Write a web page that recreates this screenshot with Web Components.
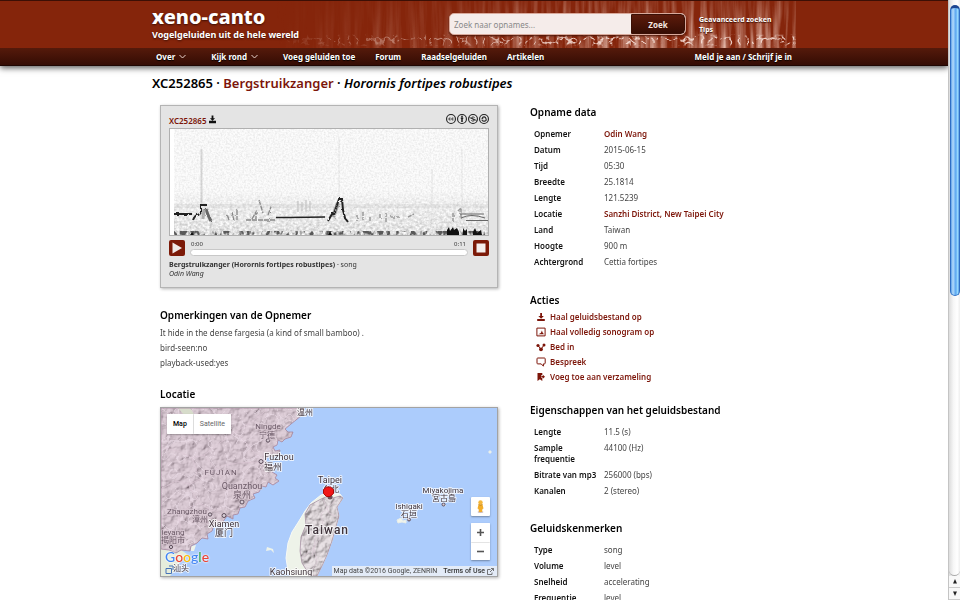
<!doctype html>
<html lang="nl">
<head>
<meta charset="utf-8">
<title>XC252865 Bergstruikzanger (Horornis fortipes robustipes) :: xeno-canto</title>
<style>
  html, body { margin: 0; height: 100%; }
  body {
    --brand: #85250b;
    --link: #7c1509;
    --ink: #111;
    --text: #444;
    font: 400 8px/15px "Noto Sans", "Open Sans", "Noto Sans CJK SC", sans-serif;
    color: var(--text);
    background: #fff;
  }
</style>
</head>
<body>
<xc-window>
  <xc-header slot="header"></xc-header>
  <xc-page>
    <xc-title slot="title" code="XC252865" name="Bergstruikzanger" species="Horornis fortipes robustipes"></xc-title>
    <xc-player slot="left" code="XC252865" start="0:00" end="0:11">
      <span slot="what"><b>Bergstruikzanger (Horornis fortipes robustipes)</b> · song</span>
      <span slot="who">Odin Wang</span>
    </xc-player>
    <xc-section slot="left" class="remarks" heading="Opmerkingen van de Opnemer">
      <div>It hide in the dense fargesia (a kind of small bamboo) .</div>
      <div>bird-seen:no</div>
      <div>playback-used:yes</div>
    </xc-section>
    <xc-section slot="left" class="place" heading="Locatie"><xc-map></xc-map></xc-section>

    <xc-section slot="right" class="facts first" heading="Opname data">
      <xc-facts rows='[["Opnemer","Odin Wang",1],["Datum","2015-06-15"],["Tijd","05:30"],["Breedte","25.1814"],["Lengte","121.5239"],["Locatie","Sanzhi District, New Taipei City",1],["Land","Taiwan"],["Hoogte","900 m"],["Achtergrond","Cettia fortipes"]]'></xc-facts>
    </xc-section>
    <xc-section slot="right" class="actions" heading="Acties">
      <xc-action icon="download">Haal geluidsbestand op</xc-action>
      <xc-action icon="sonogram">Haal volledig sonogram op</xc-action>
      <xc-action icon="share">Bed in</xc-action>
      <xc-action icon="discuss">Bespreek</xc-action>
      <xc-action icon="collect">Voeg toe aan verzameling</xc-action>
    </xc-section>
    <xc-section slot="right" class="facts file" heading="Eigenschappen van het geluidsbestand">
      <xc-facts rows='[["Lengte","11.5 (s)"],["Sample frequentie","44100 (Hz)"],["Bitrate van mp3","256000 (bps)"],["Kanalen","2 (stereo)"]]'></xc-facts>
    </xc-section>
    <xc-section slot="right" class="facts" heading="Geluidskenmerken">
      <xc-facts rows='[["Type","song"],["Volume","level"],["Snelheid","accelerating"],["Frequentie","level"]]'></xc-facts>
    </xc-section>
  </xc-page>
  <xc-scrollbar slot="bar"></xc-scrollbar>
</xc-window>

<script>
const define = (name, render) => customElements.define(name, class extends HTMLElement {
  constructor() {
    super();
    this.attachShadow({ mode: 'open' });
  }
  connectedCallback() {
    const t = document.createElement('template');
    t.innerHTML = render(this);
    this.shadowRoot.replaceChildren(t.content.cloneNode(true));
  }
});

define('xc-window', () => `
<style>
  :host { display: flex; height: 100vh; overflow: hidden; }
  .view { flex: 1; min-width: 0; overflow: hidden; }
</style>
<div class="view"><slot name="header"></slot><slot></slot></div>
<slot name="bar"></slot>`);

define('xc-scrollbar', () => `
<style>
  :host { display: flex; flex-direction: column; flex: none; width: 12px; box-sizing: border-box;
    border-left: 1px solid #c4c4c4; background: linear-gradient(90deg, #dcdcdc, #f6f6f6 40%, #fff 75%, #eee); }
  .track { flex: 1; padding: 5px 0 0 1px; border-bottom: 1px solid #aaa; border-radius: 0 0 6px 6px; }
  .thumb { height: 51%; border-radius: 5px; border: 1px solid #2e6fc4; border-top: 3px solid #1b4591; box-sizing: border-box;
    background: linear-gradient(90deg, #5c9fe6, #b5dcfb 25%, #7dbcf5 45%, #5aa6f0 60%, #9fe0ff 85%, #4c93df); }
  .arrow { height: 12px; display: grid; place-items: center; background: #f8f8f8; border-bottom: 1px solid #ccc; box-sizing: border-box; }
  svg { width: 6px; height: 5px; display: block; fill: #222; }
</style>
<div class="track"><div class="thumb"></div></div>
<div class="arrow"><svg viewBox="0 0 6 5"><path d="M3 0 5 4.500H1Z"/></svg></div>
<div class="arrow"><svg viewBox="0 0 6 5"><path d="M3 5 1 .5h4Z"/></svg></div>`);

define('xc-header', () => `
<style>
  :host { display: block; position: relative; color: #fff; font-weight: 700; box-shadow: 0 2px 6px rgba(0,0,0,.65); }
  .top { border-top: 1px solid #3c0f05; background: #85250b; }
  .wrap { max-width: 644px; margin: 0 auto; box-sizing: border-box; }
  .row { position: relative; display: flex; height: 47px; }
  .voice { position: absolute; right: 0; top: 0; width: 520px; height: 47px; }
  .brand { position: relative; text-shadow: 0 1px 2px #3c0f05; }
  .logo { display: block; font-size: 20px; font-weight: 800; line-height: 24px; padding-top: 4px; }
  .tag { font-size: 9px; line-height: 12px; }
  a { color: inherit; text-decoration: none; }
  form { position: relative; display: flex; box-sizing: border-box; margin: 12px 0 0 auto; width: 237px; height: 22px;
    border-radius: 5px; border: 1px solid #d9a99b; background: #f5ecea; box-shadow: 0 1px 2px #4a1508; overflow: hidden; }
  input { flex: 1; min-width: 0; border: 0; padding: 0 4px; background: none; font: 400 8px "Noto Sans", sans-serif; color: #444; outline: 0; }
  input::placeholder { color: #888; opacity: 1; }
  form button { width: 54px; border: 1px solid #3a0f05; border-radius: 0 4px 4px 0; padding: 0; color: #f5e6e0;
    background: linear-gradient(#5c1b0b, #360d04); font: 700 8px "Noto Sans", sans-serif; }
  .help { position: relative; width: 110px; box-sizing: border-box; padding: 14px 0 0 13px; font-size: 7px; line-height: 10px; text-shadow: 0 1px 1px #3c0f05; }
  .help a { display: block; white-space: nowrap; }
  .bar { background: linear-gradient(#551a0b, #340c04); border-bottom: 1px solid #1f0602; }
  nav { display: flex; align-items: center; gap: 20px; padding: 0 4px; height: 17px; line-height: 17px; text-shadow: 0 1px 1px #000; white-space: nowrap; }
  nav button { font: inherit; color: inherit; background: none; border: 0; padding: 0 5px 0 0; display: flex; align-items: center; gap: 4px; text-shadow: inherit; }
  nav svg { width: 7px; height: 5px; fill: none; stroke: #e9d3cc; stroke-width: 1; }
  .login { margin-left: auto; }
</style>
<header>
<div class="top"><div class="wrap row">
  <svg class="voice" viewBox="0 0 520 47" preserveAspectRatio="none" aria-hidden="true">
    <defs>
      <linearGradient id="fade"><stop offset="0" stop-color="#000"/><stop offset=".35" stop-color="#555"/><stop offset=".6" stop-color="#ddd"/></linearGradient>
      <linearGradient id="fall" x2="0" y2="1"><stop offset="0" stop-color="#000" stop-opacity=".6"/><stop offset=".8" stop-color="#000" stop-opacity="0"/></linearGradient>
      <linearGradient id="band" x2="0" y2="1"><stop offset=".7" stop-color="#000"/><stop offset=".78" stop-color="#fff"/><stop offset=".9" stop-color="#fff"/><stop offset=".97" stop-color="#000"/></linearGradient>
      <linearGradient id="left"><stop offset="0" stop-color="#000"/><stop offset=".12" stop-color="#000" stop-opacity=".75"/><stop offset=".6" stop-color="#000" stop-opacity=".1"/></linearGradient>
      <mask id="m1"><rect width="520" height="47" fill="url(#fade)"/><rect width="520" height="47" fill="url(#fall)"/></mask>
      <mask id="m2"><rect width="520" height="47" fill="url(#band)"/><rect width="520" height="47" fill="url(#left)"/></mask>
      <filter id="streak" x="0" y="0" width="1" height="1"><feTurbulence type="fractalNoise" baseFrequency=".16 .012" numOctaves="3" seed="7"/><feColorMatrix values="0 0 0 0 .92  0 0 0 0 .68  0 0 0 0 .6  2 0 0 0 -.780"/></filter>
      <filter id="calls" x="0" y="0" width="1" height="1"><feTurbulence type="turbulence" baseFrequency=".11 .13" numOctaves="2" seed="4"/><feColorMatrix values="0 0 0 0 .93  0 0 0 0 .74  0 0 0 0 .68  -8 0 0 0 1.400"/></filter>
    </defs>
    <g mask="url(#m1)"><rect width="520" height="47" filter="url(#streak)"/></g>
    <g mask="url(#m2)"><rect width="520" height="47" filter="url(#calls)"/></g>
  </svg>
  <div class="brand"><a class="logo" href="#">xeno-canto</a><div class="tag">Vogelgeluiden uit de hele wereld</div></div>
  <form><input type="text" aria-label="Zoek naar opnames" placeholder="Zoek naar opnames..."><button type="button">Zoek</button></form>
  <div class="help"><a href="#">Geavanceerd zoeken</a><a href="#">Tips</a></div>
</div></div>
<div class="bar"><nav class="wrap">
  <button type="button" aria-haspopup="true">Over <svg viewBox="0 0 7 5"><path d="M.5 1 3.500 4l3-3"/></svg></button>
  <button type="button" aria-haspopup="true">Kijk rond <svg viewBox="0 0 7 5"><path d="M.5 1 3.500 4l3-3"/></svg></button>
  <a href="#">Voeg geluiden toe</a><a href="#">Forum</a><a href="#">Raadselgeluiden</a><a href="#">Artikelen</a>
  <a class="login" href="#">Meld je aan / Schrijf je in</a>
</nav></div>
</header>`);

define('xc-page', () => `
<style>
  :host { display: block; max-width: 644px; margin: 0 auto; padding-top: 8px; }
  .cols { display: grid; grid-template-columns: 338fr 266fr; column-gap: 32px; padding: 13px 0 0 8px; }
  ::slotted(.remarks) { --pad: 3px; margin-top: 20px; }
  ::slotted(.place) { --pad: 6px; margin-top: 17px; }
  ::slotted(.facts) { --pad: 7px; margin-top: 22px; }
  ::slotted(.facts.first) { margin-top: 0; }
  ::slotted(.actions) { --pad: 2px; margin-top: 23px; }
  ::slotted(.facts.file) { margin-top: 19px; }
</style>
<main><slot name="title"></slot>
<div class="cols"><div><slot name="left"></slot></div><div><slot name="right"></slot></div></div></main>`);

define('xc-title', el => `
<style>
  :host { display: block; }
  h1 { margin: 0; font-size: 13px; line-height: 18px; font-weight: 600; color: #000; }
  a { color: var(--link); text-decoration: none; }
</style>
<h1>${el.getAttribute('code')} · <a href="#">${el.getAttribute('name')}</a> · <em>${el.getAttribute('species')}</em></h1>`);

define('xc-section', el => `
<style>
  :host { display: block; }
  h2 { margin: 0 0 var(--pad, 6px); font-size: 10px; line-height: 14px; font-weight: 600; color: #000; }
</style>
<section><h2>${el.getAttribute('heading')}</h2><slot></slot></section>`);

define('xc-facts', el => `
<style>
  :host { display: block; }
  table { border-collapse: collapse; line-height: 11px; }
  th, td { padding: 2px 4px 3px; text-align: left; vertical-align: top; }
  th { box-sizing: border-box; width: 70px; font-weight: 600; color: var(--ink); padding-right: 0; }
  a { color: var(--link); font-weight: 600; text-decoration: none; }
</style>
<table><tbody>${JSON.parse(el.getAttribute('rows')).map(([k, v, link]) =>
  `<tr><th scope="row">${k}</th><td>${link ? `<a href="#">${v}</a>` : v}</td></tr>`).join('')}</tbody></table>`);

const ICONS = {
  download: '<path d="M4.200 1h1.800v3h1.900L5.100 6.700 2.300 4h1.900ZM1.200 7h7.600v2H1.200Z"/>',
  sonogram: '<path d="M.9 1.100h8.200v7.800H.9Z" fill="none" stroke="currentColor"/><path d="M2.200 7.300 4 6.500 5 5.700 5.900 3.500 6.600 5.600 8 7.300Z"/>',
  share: '<circle cx="2" cy="3.500" r="1.600"/><circle cx="8" cy="3" r="1.500"/><circle cx="5" cy="7.300" r="1.900"/><path d="M2 3.500 5 7.300 8 3" fill="none" stroke="currentColor"/>',
  discuss: '<path d="M1.800 1h6.600q.8 0 .8.800v4.300q0 .8-.8.800H7.400v2.300L5.200 6.900H1.800Q1 6.900 1 6.100V1.800Q1 1 1.800 1Z" fill="none" stroke="currentColor"/>',
  collect: '<path d="M1.500 1h4.800v2L5 3.500v2.200l1.300.6V9L3.900 7.200 1.500 9Z"/><path d="M5.300 4h1.500V2.700L9 4.700 6.800 6.700V5.400H5.300Z"/>'
};

define('xc-action', el => `
<style>
  :host { display: block; padding-left: 6px; }
  a { display: flex; align-items: center; gap: 4px; color: var(--link); font-weight: 600; text-decoration: none; }
  svg { width: 10px; height: 10px; fill: currentColor; }
</style>
<a href="#"><svg viewBox="0 0 10 10" aria-hidden="true">${ICONS[el.getAttribute('icon')]}</svg><slot></slot></a>`);

define('xc-player', el => `
<style>
  :host { display: block; box-sizing: border-box; padding: 8px 8px 9px; background: #e4e4e4; border: 1px solid #b4b4b4; box-shadow: 1px 1px 3px rgba(0,0,0,.3); }
  header { display: flex; justify-content: space-between; height: 14px; line-height: 13px; }
  header a { color: var(--link); font-weight: 600; text-decoration: none; display: flex; gap: 2px; }
  header a svg { width: 7px; height: 9px; margin-top: 1px; fill: #111; }
  .cc { display: flex; gap: 1px; fill: none; stroke: #222; stroke-width: 1; }
  .cc svg { width: 10px; height: 10px; }
  .sono { display: block; box-sizing: border-box; width: 100%; height: auto; aspect-ratio: 320 / 108; border: 1px solid #b0b0b0; background: #fff; }
  .controls { display: grid; grid-template-columns: 16px 1fr 16px; column-gap: 5px; margin-top: 4px; align-items: center; }
  .controls button { width: 16px; height: 16px; padding: 0; border: 0; border-radius: 2px; background: #7c1a08; display: grid; place-items: center; }
  .controls button svg { width: 14px; height: 14px; display: block; }
  .times { display: flex; justify-content: space-between; font-size: 6px; line-height: 8px; padding: 0 2px 0 1px; color: #333; }
  input { appearance: none; display: block; width: 100%; height: 7px; margin: 1px 0 0; background: #fff; border: 1px solid #c8c8c8; border-radius: 4px; box-sizing: border-box; }
  input::-webkit-slider-thumb { appearance: none; width: 0; height: 0; }
  .what, .who { font-size: 7px; line-height: 9px; color: #333; }
  .what { margin-top: 4px; }
  .who { font-style: italic; }
</style>
<header><a href="#">${el.getAttribute('code')}<svg viewBox="0 0 7 9"><path d="M2.600.5h1.800v2.700h1.700L3.500 5.800.9 3.200h1.700ZM0 5.800h7v2.400H0Z"/></svg></a>
<div class="cc">
  <svg viewBox="0 0 9 9"><circle cx="4.500" cy="4.500" r="4"/><path d="M4.100 3.700q-1.500-.6-1.500.8t1.500.8M6.700 3.700q-1.500-.6-1.500.8t1.500.8" stroke-width=".8"/></svg>
  <svg viewBox="0 0 9 9"><circle cx="4.500" cy="4.500" r="4"/><path d="M4.500 1.600v1M4.500 3v4.300M3.400 3.800h2.200" stroke-width="1.400"/></svg>
  <svg viewBox="0 0 9 9"><circle cx="4.500" cy="4.500" r="4"/><path d="M6 3.300Q4.500 2 3.500 3t.9 1.500T5.500 6Q4.500 7 3 5.800M1.300 3.200l6.400 2.600" stroke-width=".8"/></svg>
  <svg viewBox="0 0 9 9"><circle cx="4.500" cy="4.500" r="4"/><path d="M2.900 3.700Q3.400 2.500 4.700 2.600T6.400 4.500 4.700 6.400 2.900 5.300M2.200 4.300h1.600" stroke-width="1"/></svg>
</div></header>
<svg class="sono" viewBox="0 0 318 106" preserveAspectRatio="none" role="img" aria-label="Sonogram">
  <defs>
    <filter id="grain" x="0" y="0" width="1" height="1"><feTurbulence type="fractalNoise" baseFrequency=".55" numOctaves="2" seed="3"/><feColorMatrix values="0 0 0 0 .4  0 0 0 0 .4  0 0 0 0 .4  .5 0 0 0 -.180"/></filter>
    <filter id="dense" x="0" y="0" width="1" height="1"><feTurbulence type="fractalNoise" baseFrequency=".3 .4" numOctaves="2" seed="9"/><feColorMatrix values="0 0 0 0 .3  0 0 0 0 .3  0 0 0 0 .3  1.200 0 0 0 -.380"/></filter>
    <filter id="floor" x="0" y="0" width="1" height="1"><feTurbulence type="fractalNoise" baseFrequency=".25 .15" numOctaves="2" seed="5"/><feColorMatrix values="0 0 0 0 .1  0 0 0 0 .1  0 0 0 0 .1  5 0 0 0 -2.300"/></filter>
    <filter id="rough" x="-.1" y="-.1" width="1.200" height="1.200"><feTurbulence type="fractalNoise" baseFrequency=".35" numOctaves="1" seed="2" result="n"/><feDisplacementMap in="SourceGraphic" in2="n" scale="3"/></filter>
    <linearGradient id="down" x2="0" y2="1"><stop offset="0" stop-color="#000"/><stop offset=".35" stop-color="#777"/><stop offset=".6" stop-color="#999"/><stop offset="1" stop-color="#fff"/></linearGradient>
    <mask id="dm"><rect y="62" width="318" height="44" fill="url(#down)"/></mask>
  </defs>
  <rect x="4" width="314" height="106" fill="#fcfcfc"/>
  <rect x="4" width="314" height="106" filter="url(#grain)"/>
  <g mask="url(#dm)"><rect x="4" y="62" width="314" height="44" filter="url(#dense)"/></g>
  <rect x="4" y="75" width="314" height="4" fill="#999" opacity=".12"/>
  <rect x="4" y="102" width="314" height="4" filter="url(#floor)"/>
  <g stroke="#888" opacity=".3" fill="none"><path d="M31.500 20v56" stroke-width="2"/><path d="M169 8v62M292 20v70M262 40v40" opacity=".5"/></g>
  <g fill="none" stroke="#222" filter="url(#rough)">
    <path d="M4 85h18" stroke-width="2"/>
    <path d="M23 91q2-5 5-5l3-2V76h6" stroke-width="2"/>
    <path d="M36 80l2 6 3 6" stroke-width="3" stroke="#666"/>
    <path d="M34 80l-1 10" stroke-width="3" stroke="#aaa"/>
    <path d="M59 91l-2-6M64 92l-2-9M67 81v10M76 91h30M82 90l4-7v7M98 86l3-8M89 71l4 13" stroke="#888" stroke-width="1.300" stroke-dasharray="5 1"/>
    <path d="M168 74l-5 14" stroke="#999" stroke-width="4"/>
    <path d="M158 92l4-7h2l2-6 3-9h3l1 11 2 8 3 4" stroke-width="2"/>
    <path d="M187 86v6M193 83v8M200 88v5M210 85v5M216 84v9M221 88h10M238 88l6-3M283 84v9M288 82l3-3v11" stroke="#999" stroke-width="1.500" stroke-dasharray="4 1"/>
  </g>
  <path d="M106 88.500h13l36-.5" stroke="#222" stroke-width="1.500" fill="none"/>
  <path d="M128 72v11M132 73v9M136 71v12M140 72v10" stroke="#bbb"/>
  <path d="M290 85h24M291 89q10-5 24 0M296 91.500h22" stroke="#666" fill="none"/>
  <path d="M277 106v-5l2-3 1 4 3-4 1 3 3-2 2 4v3ZM293 106v-7l2 3 2-2v6ZM303 106v-3l2-4 2 5 4-3 1 5ZM20 106l2-3 2 3ZM158 106l2-4 2 4Z" fill="#111"/>
</svg>
<div class="controls">
  <button type="button" aria-label="Afspelen"><svg viewBox="0 0 14 14"><path d="M2.500 1.500 12 7l-9.500 5.500Z" fill="#f1e9e7"/></svg></button>
  <div><div class="times"><span>${el.getAttribute('start')}</span><span>${el.getAttribute('end')}</span></div><input type="range" value="0" aria-label="Positie"></div>
  <button type="button" aria-label="Stoppen"><svg viewBox="0 0 14 14"><path d="M2.500 2.500h9v9h-9Z" fill="#f5efed"/></svg></button>
</div>
<div class="what"><slot name="what"></slot></div>
<div class="who"><slot name="who"></slot></div>`);

define('xc-map', () => `
<style>
  :host { display: block; position: relative; box-sizing: border-box; aspect-ratio: 338 / 170; border: 1px solid #a3a3a3; box-shadow: 1px 1px 3px rgba(0,0,0,.3); overflow: hidden; font-family: Roboto, "Noto Sans CJK SC", sans-serif; }
  .map { display: block; width: 100%; height: 100%; }
  text { font-size: 8px; fill: #40343c; stroke: #fff; stroke-opacity: .75; stroke-width: 2px; paint-order: stroke; stroke-linejoin: round; }
  .big { font-size: 9px; }
  .inland text { fill: #6b5a67; stroke: #d9c8d2; stroke-opacity: .6; }
  .kinds { position: absolute; left: 6px; top: 6px; display: flex; background: #fff; border-radius: 1px; box-shadow: 0 1px 2px rgba(0,0,0,.3); }
  button { border: 0; padding: 0; background: #fff; color: #666; font: 400 7px/20px Roboto, sans-serif; }
  .kinds button { padding: 0 6px; border-radius: 1px; }
  .kinds button:first-child { color: #000; font-weight: 500; border-right: 1px solid #ddd; }
  .side { position: absolute; right: 7px; bottom: 16px; display: grid; gap: 7px; width: 19px; }
  .side > * { background: #fff; border-radius: 1px; box-shadow: 0 1px 2px rgba(0,0,0,.35); }
  .side button { display: grid; place-items: center; width: 100%; height: 19px; border-radius: 1px; }
  .side svg { width: 15px; height: 15px; }
  .zoom button + button { height: 18px; border-top: 1px solid #e4e4e4; }
  .legal { position: absolute; right: 0; bottom: 0; display: flex; align-items: center; gap: 6px; padding: 0 3px 0 2px; background: rgba(245,245,245,.75); font-size: 7px; line-height: 10px; color: #444; }
  .legal a { color: #333; font-weight: 500; text-decoration: none; display: flex; align-items: center; gap: 2px; }
  .legal svg { width: 7px; height: 7px; }
  .google { position: absolute; left: 4px; bottom: 10px; font: 500 14px/18px Lato, Roboto, sans-serif; text-decoration: none; text-shadow: 0 0 2px #fff, 0 0 2px #fff; }
</style>
<svg class="map" viewBox="0 0 336 168" preserveAspectRatio="xMidYMid slice" role="img" aria-label="Kaart van Taiwan">
  <defs>
    <path id="china" d="M0 0H143L141 7 135 12 130 16 124 21 127 24 132 24 130 29 124 31 121 34 117 32 116 37 112 39 114 43 119 42 118 46 112 49 108 47 104 52 108 57 113 58 111 64 116 67 114 70 118 73 112 77 107 74 105 79 101 78 98 84 92 86 94 90 87 93 84 99 79 100 77 106 72 107 72 111 66 108 63 112 60 118 53 117 51 123 46 126 47 131 41 130 36 135 30 138 29 143 20 142 15 145 8 142 0 141Z"/>
    <path id="island" d="M167 85 160 87 150 95 144 103 138 113 131 124 127 135 125 150 127 163 130 168H156L161 158 166 147 171 133 174 122 178 108 176 99 182 90 179 86 172 86Z"/>
    <path id="hills" d="M167 88 160 91 149 97 144 106 145 117 140 129 139 143 141 155 146 163 149 168H156L161 158 166 147 171 133 174 122 178 108 176 99 182 90 179 88 172 90Z"/>
    <clipPath id="cc"><use href="#china"/></clipPath>
    <clipPath id="hc"><use href="#hills"/></clipPath>
    <filter id="relief" x="0" y="0" width="1" height="1"><feTurbulence type="fractalNoise" baseFrequency=".13" numOctaves="4" seed="11"/><feDiffuseLighting surfaceScale="4" lighting-color="#fff"><feDistantLight azimuth="225" elevation="50"/></feDiffuseLighting></filter>
    <filter id="veins" x="0" y="0" width="1" height="1"><feTurbulence type="turbulence" baseFrequency=".06" numOctaves="1" seed="6"/><feColorMatrix values="0 0 0 0 .87  0 0 0 0 .76  0 0 0 0 .84  -24 0 0 0 .9"/></filter>
  </defs>
  <rect width="336" height="168" fill="#acccfc"/>
  <path d="M0 136 20 142 26 146 20 152 16 160 9 168H0Z" fill="#e6eddc"/>
  <path d="M30 138l5-1-2 6h-3ZM108 71l-2 6-4 2 2-7ZM106 139l6 2 1 4-3-3-5 1Z" fill="#eef3ea"/>
  <use href="#china" fill="#ccb2c1"/>
  <g clip-path="url(#cc)">
    <rect width="150" height="150" filter="url(#relief)" style="mix-blend-mode:multiply" opacity=".6"/>
    <rect width="150" height="150" fill="#c9b0bf" opacity=".35"/>
    <rect width="150" height="150" filter="url(#veins)" opacity=".55"/>
    <path d="M17 0l8 9 8-3-4-6Z" fill="#d7dccb"/>
    <g fill="none" stroke="#dcc8d5" stroke-width=".7"><path d="M0 39 20 44 31 50 43 47 59 35 74 24 92 13 108 0M0 81 15 73 29 76 45 68 60 58 77 55 100 54M31 50 36 64 28 78 38 95 50 102 69 108M43 47 55 61 66 80 81 94M0 110 17 105 38 95M17 105 20 122 10 142M74 24 87 37 101 54M92 13 103 25 109 35"/></g>
  </g>
  <use href="#china" fill="none" stroke="#a486a0" stroke-width=".8"/>
  <use href="#island" fill="#eef3e9" stroke="#f8faf5" stroke-width="1"/>
  <use href="#hills" fill="#bba4b0"/>
  <g clip-path="url(#hc)">
    <rect x="124" y="84" width="60" height="84" filter="url(#relief)" style="mix-blend-mode:multiply" opacity=".7"/>
    <path d="M175 92 160 106 163 122 153 140 156 154 147 168M162 91l6 14 8 4M145 120l10 8-4 20M141 150l14-12" fill="none" stroke="#ddcbd6" stroke-width=".7"/>
  </g>
  <use href="#hills" fill="none" stroke="#9b8298" stroke-width=".6"/>
  <path d="M236 112l4-2 2 3 3-1v3l-4-1-4 1ZM246 112l3-1M282 96l3 2M328 43h2v2h-2Z" fill="#f2f5ec" stroke="#e8eeea"/>
  <g fill="#d8cdd6" stroke="#5c4d5a"><circle cx="107" cy="32.500" r="1.700"/><circle cx="100" cy="53.500" r="2"/><circle cx="81" cy="94" r="2"/><circle cx="49" cy="106.500" r="1.700"/><circle cx="63" cy="107.500" r="2"/><circle cx="10" cy="139" r="1.600"/><circle cx="248" cy="111.500" r="1.500"/><circle cx="282.500" cy="96.500" r="1.500"/></g>
  <g text-anchor="middle">
    <g class="inland"><text x="107" y="21">Ningde</text><text x="106" y="30">宁德</text><text x="60" y="67" style="letter-spacing:1px">FUJIAN</text><text x="81" y="81" class="big">Quanzhou</text><text x="81" y="90" class="big">泉州</text><text x="26" y="106">Zhangzhou</text><text x="39" y="114">漳州</text><text x="12" y="127">ieyang</text><text x="12" y="135">揭阳市</text></g>
    <text x="144" y="7">温州</text><text x="118" y="52" class="big">Fuzhou</text><text x="112" y="62" class="big">福州</text>
    <text x="63" y="119" class="big">Xiamen</text><text x="63" y="128" class="big">厦门</text><text x="20" y="163">汕头</text>
    <text x="169" y="75" class="big">Taipei</text><text x="170" y="84">台北</text><text x="166" y="126" style="font:500 12px Roboto;letter-spacing:1px">Taiwan</text><text x="130" y="167" class="big">Kaohsiung</text>
    <text x="248" y="101">Ishigaki</text><text x="248" y="109">石垣</text><text x="282" y="85">Miyakojima</text><text x="283" y="93">宮古島</text>
  </g>
  <circle cx="169" cy="89" r="2.500" fill="#6d5058"/><path d="M165.500 79h4l3 2.500v4L169 88.500h-3.500L162.500 85.500v-4Z" fill="#f01818" stroke="#a80808"/>
  <path d="M5 160.500h5.500v5H5ZM8 158h4v4" fill="none" stroke="#4673b8"/>
</svg>
<a class="google" href="#" aria-label="Google"><span style="color:#4285f4">G</span><span style="color:#ea4335">o</span><span style="color:#fbbc05">o</span><span style="color:#4285f4">g</span><span style="color:#34a853">l</span><span style="color:#ea4335">e</span></a>
<div class="kinds"><button type="button">Map</button><button type="button">Satellite</button></div>
<div class="side">
  <button type="button" aria-label="Street View"><svg viewBox="0 0 15 15"><ellipse cx="7.500" cy="13" rx="3" ry="1" fill="#cbb"/><circle cx="7.500" cy="3.500" r="2.200" fill="#f4b63a"/><path d="M5.500 5.500h4l1 4-1 .6-.5 3H6l-.5-3-1-.6Z" fill="#f2ac28"/><path d="M5.500 5.500q2 1.500 4 0" fill="none" stroke="#b9770c" stroke-width=".7"/></svg></button>
  <div class="zoom">
    <button type="button" aria-label="Inzoomen"><svg viewBox="0 0 15 15"><path d="M7.500 4v7M4 7.500h7" stroke="#555" stroke-width="1.600"/></svg></button>
    <button type="button" aria-label="Uitzoomen"><svg viewBox="0 0 15 15"><path d="M4 7.500h7" stroke="#555" stroke-width="1.600"/></svg></button>
  </div>
</div>
<div class="legal"><span>Map data ©2016 Google, ZENRIN</span><a href="#">Terms of Use <svg viewBox="0 0 7 7"><path d="M3.500 1.500h-3v5h4.500v-2M4 .5h2.500V3M6.500.5 3 4" fill="none" stroke="#666" stroke-width=".9"/></svg></a></div>`);
</script>
</body>
</html>
